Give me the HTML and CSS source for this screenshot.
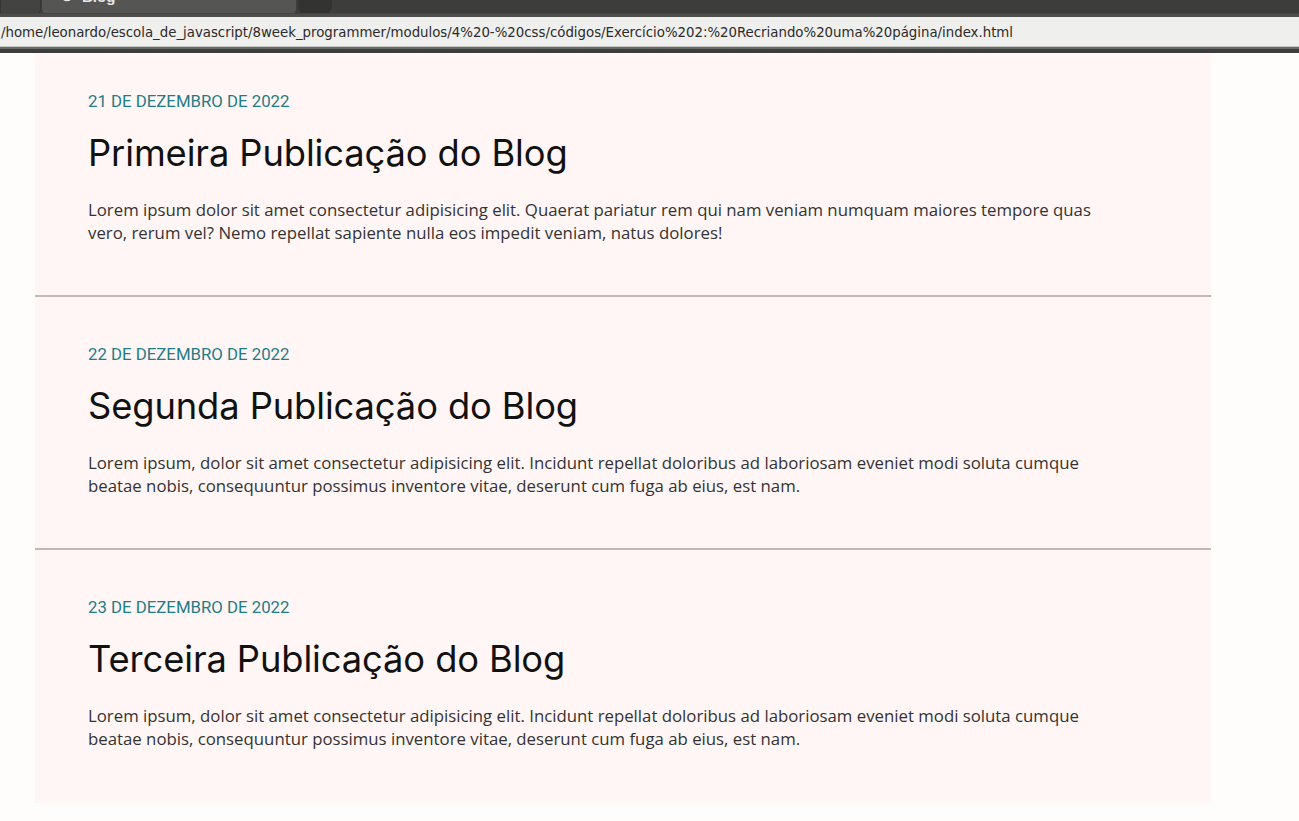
FILE: index.html
```html
<!DOCTYPE html>
<html lang="pt-BR">
<head>
<meta charset="utf-8">
<title>Blog</title>
<link rel="stylesheet" href="styles.css">
</head>
<body>
<div class="chrome">
  <div class="tabbar">
    <div class="tab tab-prev"><span class="tab-x">×</span></div>
    <div class="tab tab-active">
      <svg class="tab-icon" width="14" height="14" viewBox="0 0 14 14"><circle cx="7" cy="7" r="5.5" fill="none" stroke="#e8e8e8" stroke-width="1.6"/></svg>
      <span class="tab-title">Blog</span>
      <span class="tab-x">×</span>
    </div>
    <div class="tab-new"><span>+</span></div>
  </div>
  <div class="urlbar">/home/leonardo/escola_de_javascript/8week_programmer/modulos/4%20-%20css/códigos/Exercício%202:%20Recriando%20uma%20página/index.html</div>
  <div class="chrome-bottom"></div>
</div>
<main class="viewport">
  <section class="blog">
    <article class="post">
      <p class="date">21 de dezembro de 2022</p>
      <h2 class="title">Primeira Publicação do Blog</h2>
      <p class="text">Lorem ipsum dolor sit amet consectetur adipisicing elit. Quaerat pariatur rem qui nam veniam numquam maiores tempore quas vero, rerum vel? Nemo repellat sapiente nulla eos impedit veniam, natus dolores!</p>
    </article>
    <article class="post">
      <p class="date">22 de dezembro de 2022</p>
      <h2 class="title">Segunda Publicação do Blog</h2>
      <p class="text">Lorem ipsum, dolor sit amet consectetur adipisicing elit. Incidunt repellat doloribus ad laboriosam eveniet modi soluta cumque beatae nobis, consequuntur possimus inventore vitae, deserunt cum fuga ab eius, est nam.</p>
    </article>
    <article class="post">
      <p class="date">23 de dezembro de 2022</p>
      <h2 class="title">Terceira Publicação do Blog</h2>
      <p class="text">Lorem ipsum, dolor sit amet consectetur adipisicing elit. Incidunt repellat doloribus ad laboriosam eveniet modi soluta cumque beatae nobis, consequuntur possimus inventore vitae, deserunt cum fuga ab eius, est nam.</p>
    </article>
  </section>
</main>
</body>
</html>
```
FILE: styles.css
```css
* { box-sizing: border-box; }
html, body { margin: 0; padding: 0; }
body {
  background: #fffdfc;
  height: 821px;
  overflow: hidden;
  font-family: "Open Sans", sans-serif;
}
.chrome { background: #3c3c3a; }
.tabbar {
  height: 14px;
  display: flex;
  align-items: flex-end;
  overflow: hidden;
  background: #3d3d3b;
  border-bottom: 1px solid #444442;
}
.tab {
  height: 40px;
  flex: none;
  display: flex;
  align-items: center;
  border-radius: 0 0 6px 6px;
  margin-bottom: -2px;
  color: #e8e8e8;
  font-family: "Liberation Sans", sans-serif;
  font-size: 15px;
  font-weight: bold;
}
.tab-prev {
  width: 41px;
  background: #434341;
  border: 1px solid #363634;
  justify-content: flex-end;
  padding-right: 12px;
  border-radius: 0 0 6px 0;
}
.tab-active {
  width: 254px;
  background: #555553;
  margin-left: 1px;
  padding: 0 12px 0 18px;
  gap: 8px;
}
.tab-title { flex: 1; padding-top: 2px; }
.tab-x { color: #bdbdbd; font-weight: normal; font-size: 14px; }
.tab-new {
  width: 34px;
  height: 40px;
  margin-left: 2px;
  margin-bottom: -1px;
  background: #333331;
  border-radius: 8px;
  display: flex;
  align-items: center;
  justify-content: center;
  color: #e8e8e8;
  font-family: "Liberation Sans", sans-serif;
  font-weight: bold;
  font-size: 18px;
}
.urlbar {
  height: 33px;
  background: #efefed;
  border-top: 3px solid #4d4d4b;
  border-bottom: 1px solid #c8c8c6;
  color: #2b2b2b;
  font-family: "DejaVu Sans Condensed", "DejaVu Sans", sans-serif;
  font-size: 14.8px;
  line-height: 29px;
  padding-left: 1px;
  white-space: nowrap;
  overflow: hidden;
}
.chrome-bottom {
  height: 6px;
  background: #3d3d3b;
  border-top: 2px solid #6a6a68;
}
.viewport {
  height: 768px;
  overflow: hidden;
}
.blog {
  width: 1176px;
  margin: -9px 0 0 35px;
  background: #fff6f5;
}
.post {
  padding: 47px 53px 50px;
  border-bottom: 2px solid #bdbbba;
  height: 253px;
}
.post:last-child { border-bottom: none; }
.date {
  margin: 0;
  font-family: Roboto, sans-serif;
  font-size: 16.8px;
  line-height: 20px;
  text-transform: uppercase;
  color: #1f7d87;
}
.title {
  margin: 21px 0 0;
  font-family: Inter, sans-serif;
  font-weight: 400;
  font-size: 36.3px;
  line-height: 42px;
  color: #111;
  letter-spacing: -0.1px;
}
.text {
  margin: 24px 0 0;
  max-width: 1022px;
  font-size: 16.8px;
  line-height: 23px;
  color: #333;
}
```
